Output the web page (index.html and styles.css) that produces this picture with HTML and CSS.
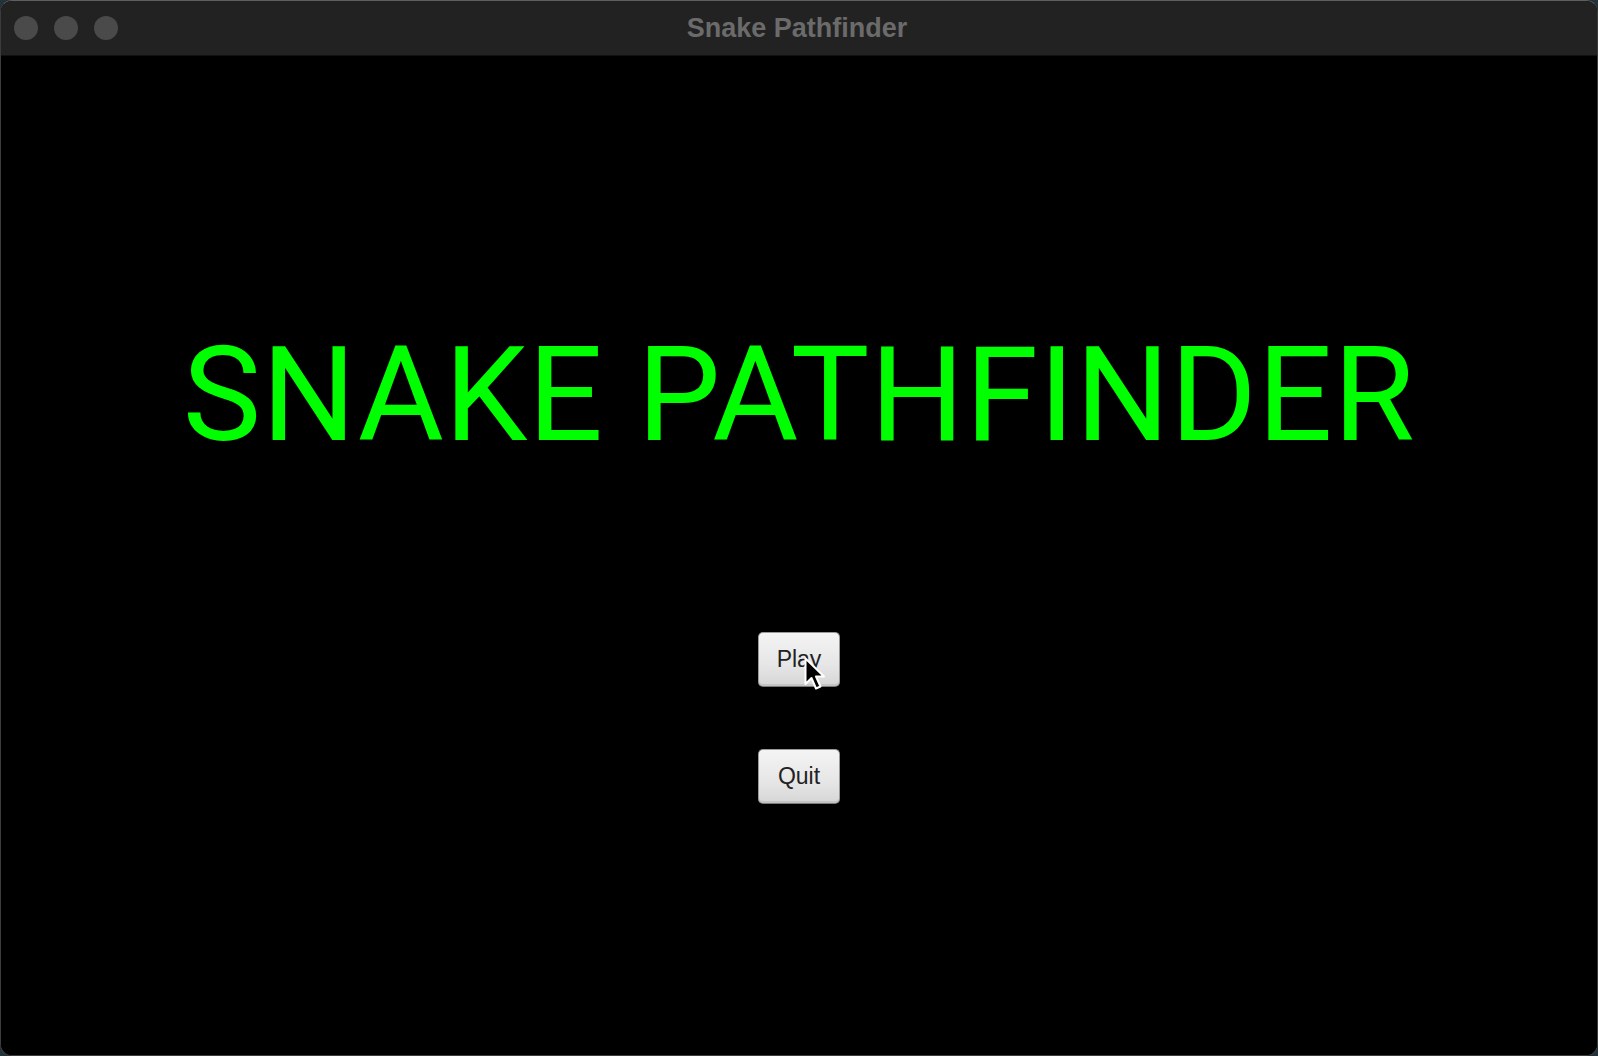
FILE: index.html
```html
<!DOCTYPE html>
<html>
<head>
<meta charset="utf-8">
<title>Snake Pathfinder</title>
<link rel="stylesheet" href="styles.css">
</head>
<body>
<div class="window">
  <div class="titlebar">
    <div class="lights">
      <span class="light"></span>
      <span class="light"></span>
      <span class="light"></span>
    </div>
    <div class="wintitle">Snake Pathfinder</div>
  </div>
  <div class="content">
    <h1 class="headline">SNAKE PATHFINDER</h1>
    <div class="menu">
      <button class="btn btn-play">Play
        <svg class="cursor" width="22" height="34" viewBox="0 0 22 34">
          <path d="M1.5 1.5 L1.5 27 L7.5 21 L12 31.5 L16.5 29.5 L12 19.5 L20 19.5 Z" fill="#000" stroke="#fff" stroke-width="2" stroke-linejoin="round"/>
        </svg>
      </button>
      <button class="btn">Quit</button>
    </div>
  </div>
</div>
</body>
</html>
```

FILE: styles.css
```css
html, body {
  margin: 0;
  padding: 0;
  width: 1598px;
  height: 1056px;
  overflow: hidden;
  background: #22343a;
}

.window {
  width: 1598px;
  height: 1056px;
  box-sizing: border-box;
  border-radius: 12px;
  overflow: hidden;
  background: #000;
  display: flex;
  flex-direction: column;
  border: 1px solid #3c3c3c;
  border-top-color: #5f5f5f;
}

.titlebar {
  height: 54px;
  flex: none;
  background: #222222;
  position: relative;
  display: flex;
  align-items: center;
  justify-content: center;
  border-bottom: 1px solid #111;
}

.lights {
  position: absolute;
  left: 13px;
  top: 15px;
  display: flex;
  gap: 16px;
}

.light {
  width: 24px;
  height: 24px;
  border-radius: 50%;
  background: #4a4a4a;
}

.wintitle {
  font-family: "Liberation Sans", Arial, sans-serif;
  font-weight: bold;
  font-size: 27px;
  color: #6b6b6b;
  margin-left: -4px;
}

.content {
  flex: 1;
  display: flex;
  flex-direction: column;
  align-items: center;
  background: #000;
}

.headline {
  margin: 273px 0 0 0;
  font-family: Roboto, "Liberation Sans", sans-serif;
  font-weight: 400;
  font-size: 132px;
  line-height: 132px;
  color: #00ff00;
  letter-spacing: 0.7px;
  white-space: nowrap;
}

.menu {
  margin-top: 171px;
  display: flex;
  flex-direction: column;
  align-items: center;
  gap: 62px;
}

.btn {
  position: relative;
  width: 82px;
  height: 55px;
  box-sizing: border-box;
  border: 1px solid #9a9a9a;
  border-bottom-color: #7a7a7a;
  border-radius: 5px;
  background: linear-gradient(#f4f4f4, #e6e6e6 60%, #d6d6d6);
  box-shadow: inset 0 -2px 0 #c4c4c4;
  font-family: "Liberation Sans", Arial, sans-serif;
  font-size: 23px;
  color: #222;
  padding: 0;
}

.cursor {
  position: absolute;
  left: 45px;
  top: 24px;
}
```
